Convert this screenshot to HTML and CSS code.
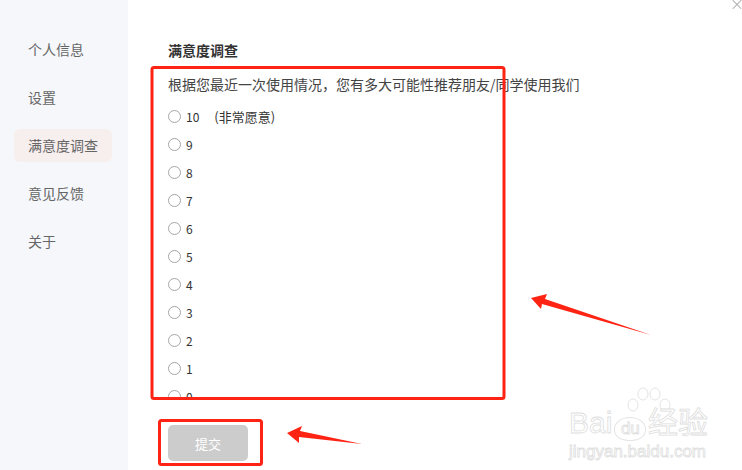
FILE: index.html
```html
<!DOCTYPE html>
<html lang="zh-CN">
<head>
  <meta charset="UTF-8">
  <meta name="viewport" content="width=device-width, initial-scale=1.0">
  <title>满意度调查</title>
  <link rel="stylesheet" href="styles.css">
</head>
<body>
  <div class="page">
    <div class="sidebar">
      <div class="menu-item">个人信息</div>
      <div class="menu-item">设置</div>
      <div class="menu-item active">满意度调查</div>
      <div class="menu-item">意见反馈</div>
      <div class="menu-item">关于</div>
    </div>

    <div class="main">
      <h2 class="title">满意度调查</h2>
      <p class="question">根据您最近一次使用情况，您有多大可能性推荐朋友/同学使用我们</p>
      <div class="options">
        <label class="option"><span class="radio"></span>10<span class="note">(非常愿意)</span></label>
        <label class="option"><span class="radio"></span>9</label>
        <label class="option"><span class="radio"></span>8</label>
        <label class="option"><span class="radio"></span>7</label>
        <label class="option"><span class="radio"></span>6</label>
        <label class="option"><span class="radio"></span>5</label>
        <label class="option"><span class="radio"></span>4</label>
        <label class="option"><span class="radio"></span>3</label>
        <label class="option"><span class="radio"></span>2</label>
        <label class="option"><span class="radio"></span>1</label>
        <label class="option"><span class="radio"></span>0</label>
      </div>
      <button class="submit" disabled>提交</button>
    </div>

    <span class="close"></span>

    <!-- annotation marks drawn on top of the screenshot -->
    <svg class="marks" width="742" height="470" viewBox="0 0 742 470">
      <rect x="152" y="67.5" width="352" height="331" rx="2" fill="none" stroke="#ff2314" stroke-width="3"/>
      <rect x="159.5" y="420.5" width="102" height="44" rx="2" fill="none" stroke="#ff2314" stroke-width="3"/>
      <polygon points="531,298 547,294 545,299 651,335 542,304 541,309" fill="#ff2314"/>
      <polygon points="287,433 302,426 300,431 362,444 299,437 299,443" fill="#ff2314"/>
    </svg>

    <div class="watermark">
      <svg class="paw" width="48" height="30" viewBox="0 0 48 30">
        <g fill="#fff" stroke="#e4e4e4" stroke-width="1">
          <ellipse cx="8" cy="19" rx="5" ry="6"/>
          <ellipse cx="18" cy="8" rx="5" ry="6"/>
          <ellipse cx="30" cy="8" rx="5" ry="6"/>
          <ellipse cx="40" cy="19" rx="5" ry="6"/>
        </g>
      </svg>
      <div class="wm-logo">Bai<span class="wm-du">du</span>经验</div>
      <div class="wm-url">jingyan.baidu.com</div>
    </div>
  </div>
</body>
</html>
```

FILE: styles.css
```css
body {
  margin: 0;
  font-family: "Noto Sans CJK SC", "Noto Sans", sans-serif;
  color: #333;
  background: #fff;
}

.page {
  position: relative;
  width: 742px;
  height: 470px;
  overflow: hidden;
  display: flex;
}

.sidebar {
  width: 128px;
  flex-shrink: 0;
  background: #f5f7fa;
  padding: 33px 16px 0 14px;
  box-sizing: border-box;
  display: flex;
  flex-direction: column;
  gap: 15px;
}

.menu-item {
  height: 33px;
  line-height: 33px;
  padding-left: 14px;
  font-size: 14px;
  color: #666;
  border-radius: 6px;
}

.menu-item.active {
  background: #f7eeee;
}

.main {
  flex: 1;
  padding: 40px 0 0 40px;
}

.title {
  margin: 0 0 14px;
  font-size: 14px;
  line-height: 20px;
  font-weight: bold;
  color: #333;
}

.question {
  margin: 0 0 8px;
  font-size: 14px;
  line-height: 20px;
  color: #444;
}

.options {
  height: 298px;
  overflow: hidden;
}

.option {
  display: flex;
  align-items: center;
  height: 28px;
  font-size: 12px;
  color: #333;
}

.radio {
  width: 11px;
  height: 11px;
  border: 1px solid #a6a6a6;
  border-radius: 50%;
  margin-right: 5px;
  background: #fff;
}

.note {
  margin-left: 15px;
  font-size: 13px;
}

.submit {
  margin-top: 25px;
  width: 80px;
  height: 36px;
  border: none;
  border-radius: 5px;
  background: #cccccc;
  color: #fff;
  font-family: inherit;
  font-size: 13px;
}

.close {
  position: absolute;
  right: 1px;
  top: 0;
  width: 9px;
  height: 9px;
}

.close::before,
.close::after {
  content: "";
  position: absolute;
  left: -1px;
  top: 4px;
  width: 12px;
  height: 1px;
  background: #aaa;
  transform: rotate(45deg);
}

.close::after {
  transform: rotate(-45deg);
}

.marks {
  position: absolute;
  left: 0;
  top: 0;
  pointer-events: none;
}

.watermark {
  position: absolute;
  left: 569px;
  top: 386px;
  width: 140px;
  color: #fff;
  -webkit-text-stroke: 0.8px #dedede;
}

.paw {
  display: block;
  margin-left: 56px;
}

.wm-logo {
  margin-top: -8px;
  font-family: "Liberation Sans", sans-serif;
  font-size: 30px;
  line-height: 30px;
  white-space: nowrap;
}

.wm-du {
  display: inline-block;
  width: 32px;
  height: 24px;
  line-height: 22px;
  margin: 0 2px;
  text-align: center;
  font-size: 17px;
  vertical-align: -1px;
  border: 1px solid #e4e4e4;
  border-radius: 50% 50% 45% 45%;
  box-sizing: border-box;
}

.wm-url {
  margin-top: 2px;
  font-family: "Liberation Sans", sans-serif;
  font-size: 17px;
  line-height: 18px;
}
```
